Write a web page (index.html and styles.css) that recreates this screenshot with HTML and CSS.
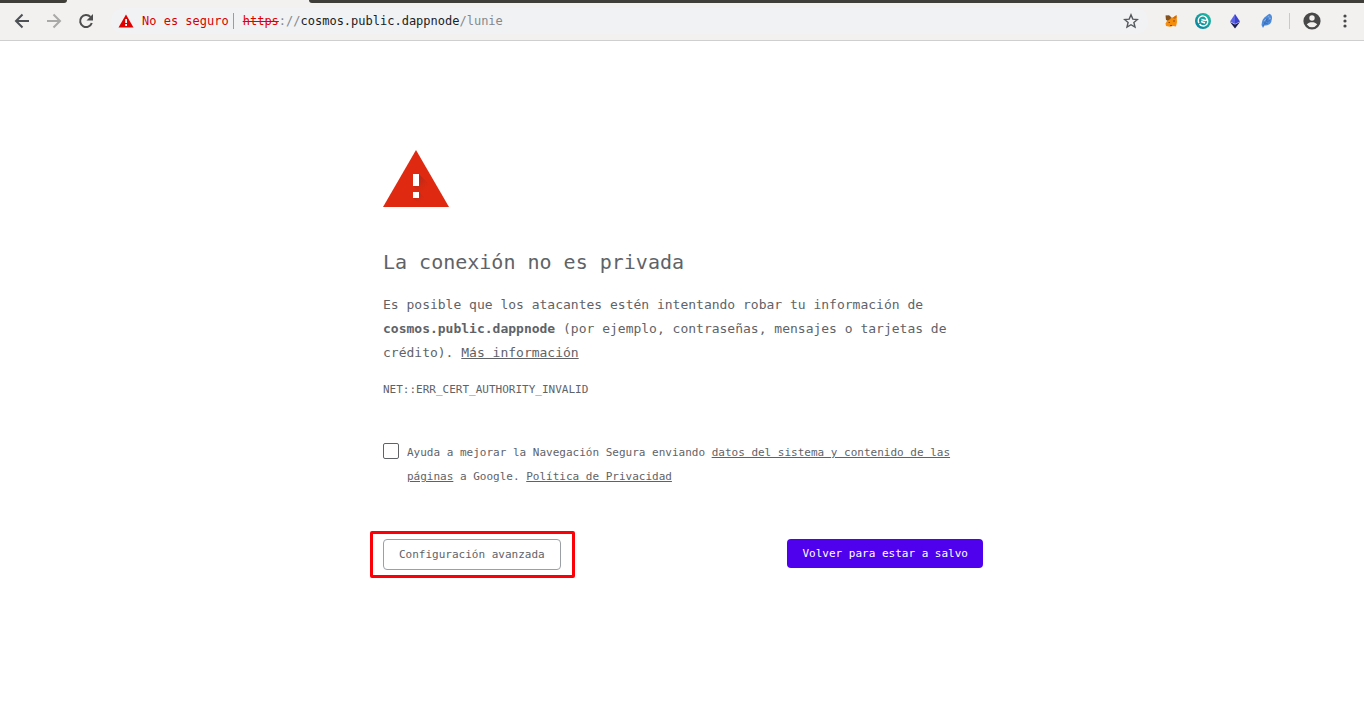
FILE: index.html
```html
<!DOCTYPE html>
<html lang="es">
<head>
<meta charset="utf-8">
<title>Error de privacidad</title>
<link rel="stylesheet" href="styles.css">
</head>
<body>
<header class="browser">
  <div class="tabstrip"><span class="tab tab-left"></span><span class="tab tab-right"></span></div>
  <div class="toolbar">
    <nav class="nav">
      <button class="icon-btn" aria-label="Atrás"><svg width="16" height="16" viewBox="0 0 16 16" fill="none" stroke="#4d5156" stroke-width="2"><path d="M15 8H2M8.500 1.500 2 8l6.500 6.500"/></svg></button>
      <button class="icon-btn" aria-label="Adelante"><svg width="16" height="16" viewBox="0 0 16 16" fill="none" stroke="#a9a9a7" stroke-width="2"><path d="M1 8h13M7.500 1.500 14 8l-6.500 6.500"/></svg></button>
      <button class="icon-btn" aria-label="Recargar"><svg width="16" height="16" viewBox="0 0 16 16"><path d="M13.800 10A6 6 0 1 1 12.500 3.900" fill="none" stroke="#4d4d4d" stroke-width="2"/><path d="M15 1v6.500H8.500z" fill="#4d4d4d"/></svg></button>
    </nav>
    <div class="omnibox">
      <svg class="warn" width="16" height="14" viewBox="0 0 16 14"><path d="M8 0.500 15.500 13.500H.5z" fill="#e00000"/><path d="M7.200 5h1.800v4H7.200zM7.200 10h1.800v2H7.200z" fill="#fff"/></svg>
      <span class="insecure">No es seguro</span>
      <span class="url"><s>https</s>://<b>cosmos.public.dappnode</b>/lunie</span>
      <button class="icon-btn star" aria-label="Añadir a marcadores"><svg width="16" height="16" viewBox="0 0 16 16"><path d="m8 1.800 1.800 4.300 4.600.4-3.500 3 1.100 4.600L8 11.700l-4 2.400 1.100-4.600-3.500-3 4.600-.4z" fill="none" stroke="#55585c" stroke-width="1.400"/></svg></button>
    </div>
    <div class="extensions">
      <button class="icon-btn" aria-label="MetaMask"><svg width="16" height="16" viewBox="0 0 16 16"><path d="M3 2.500 7 4l3 .5L13.500 2l.5 7-1 4.500-3-.5-3 .8L3 13l-.5-2.500L4 8z" fill="#f58c0a"/><path d="M2.500 2.500 6 2.200 8 4 7.500 6 5 7.500 3 7z" fill="#84521f"/><path d="m10 4.500 3.500-2.300V5L11 6z" fill="#d06a10"/><path d="M10 7.500h2v1h-2zM5.500 9h1.500v1H5.500zM7 12h2v1H7z" fill="#8b4a10"/></svg></button>
      <button class="icon-btn" aria-label="Intercambio"><svg width="16" height="16" viewBox="0 0 16 16"><defs><linearGradient id="teal" x1="1" y1="0" x2="0" y2="1"><stop stop-color="#22bfa2"/><stop offset="1" stop-color="#087b9e"/></linearGradient></defs><circle cx="8" cy="8" r="8" fill="url(#teal)"/><path d="M4 10A4.500 4.500 0 0 1 11.500 5C12.500 6.500 11.500 7.500 10 7.500L6.500 6.500M12 6A4.500 4.500 0 0 1 4.500 11M6 8.500l4 1.500" fill="none" stroke="#fff" stroke-width="1.400"/></svg></button>
      <button class="icon-btn" aria-label="Ethereum"><svg width="16" height="16" viewBox="0 0 16 16"><path d="M8 1 3 8.500 8 11z" fill="#5b62e6"/><path d="m8 1 5 7.500L8 11z" fill="#3d42cc"/><path d="m3 9 5 2.500L13 9l-5 6.500z" fill="#1a1d54"/></svg></button>
      <button class="icon-btn" aria-label="Pluma"><svg width="16" height="16" viewBox="0 0 16 16"><path d="M10.500.8C7 3 3.500 5.500 3 9l-.5 3L4 15l1.500-2.500c4 0 7-2 7-5C13.500 5 13 3 12 1.800z" fill="#4f8bd9"/><path d="M10 4 4 13M7 5.500l1 3 3-1M5 9l1 2 3-1" fill="none" stroke="#3869b4" stroke-width=".8"/><path d="m9.500 3 1 3 1.500-1M5 8l2-2" fill="none" stroke="#8cb9ee" stroke-width=".8"/></svg></button>
      <span class="separator"></span>
      <button class="icon-btn" aria-label="Perfil"><svg width="18" height="18" viewBox="0 0 18 18"><circle cx="9" cy="9" r="8.600" fill="#484848"/><circle cx="9" cy="6" r="2.700" fill="#f2f1f0"/><path d="M3.800 12.500C5 10.700 7 10.200 9 10.200s4 .5 5.200 2.300A6.400 6.400 0 0 1 9 15.200a6.400 6.400 0 0 1-5.200-2.700z" fill="#f2f1f0"/></svg></button>
      <button class="icon-btn" aria-label="Menú"><svg width="16" height="16" viewBox="0 0 16 16" fill="#484848"><circle cx="8" cy="3" r="1.600"/><circle cx="8" cy="8" r="1.600"/><circle cx="8" cy="13" r="1.600"/></svg></button>
    </div>
  </div>
</header>
<main class="page">
  <svg class="alert" width="66" height="57" viewBox="0 0 66 57"><defs><linearGradient id="shade" x1="34" y1="32" x2="44" y2="42" gradientUnits="userSpaceOnUse"><stop stop-color="#bd2916"/><stop offset="1" stop-color="#df2a11" stop-opacity="0"/></linearGradient><linearGradient id="shade-dot" x1="33" y1="46" x2="40" y2="53" gradientUnits="userSpaceOnUse"><stop stop-color="#bd2916"/><stop offset="1" stop-color="#df2a11" stop-opacity="0"/></linearGradient></defs><path d="M33 0 66 57H0z" fill="#df2a11"/><path d="m36 24 18 18-6 12-18-18z" fill="url(#shade)"/><path d="m36 42 15 15H39l-9-9z" fill="url(#shade-dot)"/><path d="M30 24h6v12h-6zM30 42h6v6h-6z" fill="#fff"/></svg>
  <h1>La conexión no es privada</h1>
  <p class="message">Es posible que los atacantes estén intentando robar tu información de <strong>cosmos.public.dappnode</strong> (por ejemplo, contraseñas, mensajes o tarjetas de crédito). <a href="#">Más información</a></p>
  <div class="code">NET::ERR_CERT_AUTHORITY_INVALID</div>
  <div class="optin">
    <input type="checkbox" id="report">
    <label for="report">Ayuda a mejorar la Navegación Segura enviando <a href="#">datos del sistema y contenido de las páginas</a> a Google. <a href="#">Política de Privacidad</a></label>
  </div>
  <div class="actions">
    <div class="marked"><button class="btn secondary">Configuración avanzada</button></div>
    <button class="btn primary">Volver para estar a salvo</button>
  </div>
</main>
</body>
</html>
```
FILE: styles.css
```css
* { box-sizing: border-box; }

body {
  margin: 0;
  background: #fff;
  color: #5f6368;
  font-family: "DejaVu Sans Mono", "Liberation Mono", monospace;
}

button { font-family: inherit; margin: 0; }

.browser {
  background: #f2f1f0;
  border-bottom: 1px solid #cfcfcf;
}

.tabstrip {
  display: flex;
  justify-content: space-between;
  height: 3px;
}

.tab { background: #403e38; }
.tab-left { width: 67px; border-bottom-right-radius: 3px; }
.tab-right { flex: 1; margin-left: 242px; border-bottom-left-radius: 3px; }

.toolbar {
  display: flex;
  align-items: center;
  height: 37px;
  padding: 0 11px 1px 14px;
}

.nav, .extensions { display: flex; gap: 16px; }
.extensions { align-items: center; }

.icon-btn {
  display: flex;
  padding: 0;
  border: 0;
  background: none;
}

.nav { margin-right: 17px; }
.nav .icon-btn { width: 16px; }

.omnibox {
  display: flex;
  flex: 1;
  align-items: center;
  height: 26px;
  padding: 0 9px 0 7px;
  margin-right: 15px;
  border-radius: 13px;
  background: #f0f2f4;
  font-size: 12px;
  white-space: nowrap;
}

.insecure {
  margin-left: 8px;
  padding-right: 4px;
  border-right: 1px solid #9a9c9f;
  color: #d90000;
  line-height: 16px;
}

.url { margin-left: 9px; color: #85888c; }
.url s { color: #e00000; }
.url b { color: #202124; font-weight: 400; }
.star { margin-left: auto; }

.separator {
  width: 1px;
  height: 16px;
  margin: 0 -3px 0 -2px;
  background: #c9c9c9;
}

.page {
  width: 100%;
  max-width: 602px;
  margin: 0 auto;
  padding: 109px 0 48px 2px;
}

.alert { display: block; }

h1 {
  margin: 41px 0 16px;
  font-size: 20px;
  font-weight: 400;
  line-height: 29px;
}

.message {
  margin: 0;
  font-size: 13px;
  line-height: 24px;
}

a { color: inherit; text-decoration: underline; }

.code {
  margin-top: 16px;
  font-size: 11px;
  line-height: 18px;
}

.optin {
  display: flex;
  gap: 8px;
  margin-top: 42px;
  font-size: 11px;
  line-height: 24px;
}

.optin input {
  appearance: none;
  flex: none;
  width: 16px;
  height: 16px;
  margin: 2px 0 0;
  border: 1px solid #5f6368;
  border-radius: 2px;
  background: #fff;
}

.optin label { padding-right: 8px; }

.actions {
  display: flex;
  align-items: flex-start;
  justify-content: space-between;
  margin-top: 50px;
}

.btn {
  display: block;
  padding: 8px 15px;
  border-radius: 4px;
  font-size: 11px;
  line-height: 13px;
}

.secondary {
  border: 1px solid #9aa0a6;
  background: #fff;
  color: #5f6368;
}

.primary {
  border: 0;
  background: #4f00ed;
  color: #fff;
}

.marked { position: relative; }

.marked::after {
  content: "";
  position: absolute;
  inset: -8px -14px -8px -13px;
  border: 3px solid #fb0007;
  border-radius: 2px;
  pointer-events: none;
}
```
